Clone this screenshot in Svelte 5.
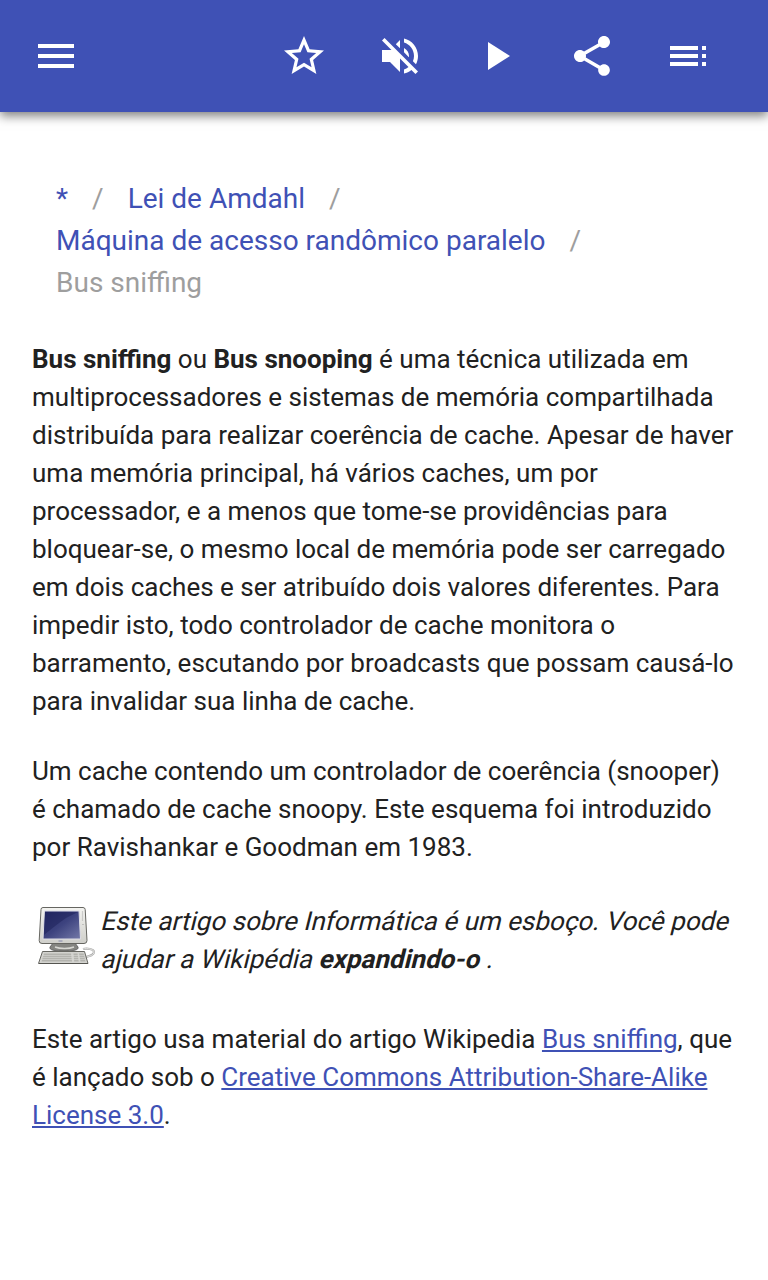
<script>
  const actions = [
    {
      label: 'Favorito',
      path: 'M22 9.24l-7.19-.62L12 2 9.19 8.63 2 9.24l5.46 4.73L5.82 21 12 17.27 18.18 21l-1.63-7.03L22 9.24zM12 15.4l-3.76 2.27 1-4.28-3.32-2.88 4.38-.38L12 6.1l1.71 4.04 4.38.38-3.32 2.88 1 4.28L12 15.4z'
    },
    {
      label: 'Sem som',
      path: 'M16.5 12c0-1.77-1.02-3.29-2.5-4.03v2.21l2.45 2.45c.03-.2.05-.41.05-.63zm2.5 0c0 .94-.2 1.82-.54 2.64l1.51 1.51C20.63 14.91 21 13.5 21 12c0-4.28-2.99-7.86-7-8.77v2.06c2.89.86 5 3.54 5 6.71zM4.27 3L3 4.27 7.73 9H3v6h4l5 5v-6.73l4.25 4.25c-.67.52-1.42.93-2.25 1.18v2.06c1.38-.31 2.63-.95 3.69-1.81L19.73 21 21 19.73l-9-9L4.27 3zM12 4L9.91 6.09 12 8.18V4z'
    },
    { label: 'Reproduzir', path: 'M8 5v14l11-7z' },
    {
      label: 'Compartilhar',
      path: 'M18 16.08c-.76 0-1.44.3-1.96.77L8.91 12.7c.05-.23.09-.46.09-.7s-.04-.47-.09-.7l7.05-4.11c.54.5 1.25.81 2.04.81 1.66 0 3-1.34 3-3s-1.34-3-3-3-3 1.34-3 3c0 .24.04.47.09.7L8.04 9.81C7.5 9.31 6.79 9 6 9c-1.66 0-3 1.34-3 3s1.34 3 3 3c.79 0 1.5-.31 2.04-.81l7.12 4.16c-.05.21-.08.43-.08.65 0 1.61 1.31 2.92 2.92 2.92 1.61 0 2.92-1.31 2.92-2.92s-1.31-2.92-2.92-2.92z'
    },
    {
      label: 'Conteúdo',
      path: 'M3 9h14V7H3v2zm0 4h14v-2H3v2zm0 4h14v-2H3v2zm16 0h2v-2h-2v2zm0-10v2h2V7h-2zm0 6h2v-2h-2v2z'
    }
  ];

  const crumbs = ['*', 'Lei de Amdahl', 'Máquina de acesso randômico paralelo'];
</script>

<header>
  <button aria-label="Menu">
    <svg viewBox="0 0 24 24"><path d="M3 18h18v-2H3v2zm0-5h18v-2H3v2zm0-7v2h18V6H3z" /></svg>
  </button>
  <div class="actions">
    {#each actions as action}
      <button aria-label={action.label}>
        <svg viewBox="0 0 24 24"><path d={action.path} /></svg>
      </button>
    {/each}
  </div>
</header>

<main>
  <ol class="breadcrumb">
    {#each crumbs as crumb}
      <li><a href="#top">{crumb}</a><span class="slash">/</span></li>
    {/each}
    <li class="current">Bus sniffing</li>
  </ol>

  <p>
    <b>Bus sniffing</b> ou <b>Bus snooping</b> é uma técnica utilizada em multiprocessadores e sistemas
    de memória compartilhada distribuída para realizar coerência de cache. Apesar de haver uma memória
    principal, há vários caches, um por processador, e a menos que tome-se providências para
    bloquear-se, o mesmo local de memória pode ser carregado em dois caches e ser atribuído dois valores
    diferentes. Para impedir isto, todo controlador de cache monitora o barramento, escutando por
    broadcasts que possam causá-lo para invalidar sua linha de cache.
  </p>
  <p>
    Um cache contendo um controlador de coerência (snooper) é chamado de cache snoopy. Este esquema foi
    introduzido por Ravishankar e Goodman em 1983.
  </p>

  <div class="stub">
    <svg class="computer" viewBox="0 0 60 60">
      <defs>
        <linearGradient id="screen" x1="0" y1="0" x2="1" y2="1">
          <stop offset="0" stop-color="#262a68" />
          <stop offset="0.5" stop-color="#3d437f" />
          <stop offset="1" stop-color="#7479a8" />
        </linearGradient>
        <linearGradient id="case" x1="0" y1="0" x2="0" y2="1">
          <stop offset="0" stop-color="#f4f4f1" />
          <stop offset="1" stop-color="#cfcfca" />
        </linearGradient>
      </defs>
      <path d="M47 44c4-1 11 0 11 3c0 3-4 4-8 5" fill="none" stroke="#aaa" stroke-width="2.2" />
      <path d="M47 44c4-1 11 0 11 3c0 3-4 4-8 5" fill="none" stroke="#e6e6e3" stroke-width="1" />
      <path d="M17 38h22l3 4c1 3-4 4-14 4s-15-1-14-4z" fill="#858581" stroke="#555" stroke-width="0.8" />
      <path d="M19 42c5 2 14 2 19 0" fill="none" stroke="#d7d7d2" stroke-width="1.5" />
      <path d="M7 2.5h40q2 0 2.200 2l1.800 31q0 3-3 3H6q-3 0-2.800-3l1.800-31q0-2 2-2z" fill="url(#case)" stroke="#666661" />
      <path d="M8.500 6h34.500l1.500 28H7z" fill="url(#screen)" stroke="#dddde5" />
      <path d="M9 7h33L30 13Q20 20 8 30z" fill="#1b2058" opacity="0.5" />
      <path d="M46.500 6.500v9M47 19v2" stroke="#aaa" stroke-width="1.200" stroke-dasharray="1 1" />
      <path d="M22.500 36h4" stroke="#7477a4" stroke-width="0.8" />
      <path d="M6.500 46.500h42l3.500 12H2.500z" fill="#d3d3cf" stroke="#666661" />
      <path d="M8 48.500h27l1 8H5.500zM37.500 48.500h4l1.200 8h-4.500zM43 48.500h4.500l2 8h-5z" fill="#b3b3ae" />
      <path d="M7 50.500h41M6.500 52.500h42M6 54.500h43" stroke="#d9d9d5" stroke-width="0.600" />
      <path d="M3 58.500h49" stroke="#555550" />
    </svg>
    <div class="note">
      <span>Este artigo sobre Informática é um esboço. Você pode</span>
      <span>ajudar a Wikipédia <b>expandindo-o</b> .</span>
    </div>
  </div>

  <p>
    Este artigo usa material do artigo Wikipedia <a href="#source">Bus sniffing</a>, que é lançado sob o
    <a href="#license">Creative Commons Attribution-Share-Alike License 3.0</a>.
  </p>
</main>

<style>
  :global(body) {
    margin: 0;
    background: #fff;
    color: #212121;
    font-family: Roboto, sans-serif;
    font-size: 26px;
    line-height: 38px;
  }

  header {
    display: flex;
    justify-content: space-between;
    box-sizing: border-box;
    height: 112px;
    padding: 8px 32px 8px 8px;
    background: #3f51b5;
    box-shadow: 0 4px 10px rgba(0, 0, 0, 0.5);
  }

  .actions {
    display: flex;
  }

  button {
    display: flex;
    align-items: center;
    justify-content: center;
    width: 96px;
    height: 96px;
    padding: 0;
    border: 0;
    background: none;
  }

  button svg {
    width: 48px;
    height: 48px;
    fill: #fff;
  }

  main {
    padding: 66px 32px 64px;
  }

  a {
    color: #3f51b5;
  }

  .breadcrumb {
    display: flex;
    flex-wrap: wrap;
    margin: 0 0 36px;
    padding: 0 24px;
    list-style: none;
    font-size: 28px;
    line-height: 42px;
  }

  .breadcrumb a {
    text-decoration: none;
  }

  .slash {
    padding: 0 24px;
    color: #9e9e9e;
  }

  .current {
    color: #9e9e9e;
  }

  p {
    margin: 0 0 32px;
  }

  .stub {
    display: flex;
    align-items: flex-start;
    gap: 4px;
    margin: 36px 0 42px 4px;
  }

  .computer {
    flex: none;
    width: 60px;
    height: 60px;
    margin-top: 3px;
  }

  /* slant the upright face instead of using the narrower italic */
  .note span {
    display: block;
    width: max-content;
    transform: skewX(-14deg);
    transform-origin: 0 28px;
  }
</style>
